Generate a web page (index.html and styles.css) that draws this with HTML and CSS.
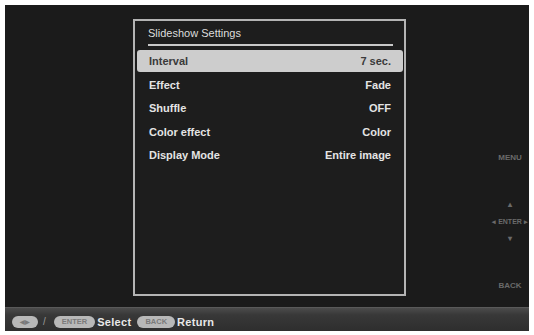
FILE: index.html
```html
<!DOCTYPE html>
<html lang="en">

<head>
    <meta charset="UTF-8">
    <meta name="viewport" content="width=device-width, initial-scale=1.0">
    <title>Slideshow Settings</title>
    <link rel="stylesheet" href="styles.css">
</head>

<body>

    <div class="screen">
        <div class="main">
            <div class="panel">
                <div class="panel-title">Slideshow Settings</div>
                <div class="settings">
                    <div class="row selected"><span>Interval</span><span>7 sec.</span></div>
                    <div class="row"><span>Effect</span><span>Fade</span></div>
                    <div class="row"><span>Shuffle</span><span>OFF</span></div>
                    <div class="row"><span>Color effect</span><span>Color</span></div>
                    <div class="row"><span>Display Mode</span><span>Entire image</span></div>
                </div>
            </div>

            <!-- hardware key hints -->
            <div class="side-keys">
                <div class="key-label menu-key">MENU</div>
                <div class="dpad">
                    <div class="dot">&#9652;</div>
                    <div class="enter-row">&#9666; ENTER &#9656;</div>
                    <div class="dot">&#9662;</div>
                </div>
                <div class="key-label back-key">BACK</div>
            </div>
        </div>

        <div class="guide-bar">
            <span class="pill pill-arrows">&#9664;&#9654;</span>
            <span class="slash">/</span>
            <span class="pill">ENTER</span>
            <span class="guide-text">Select</span>
            <span class="pill">BACK</span>
            <span class="guide-text">Return</span>
        </div>
    </div>

</body>

</html>
```

FILE: styles.css
```css
/* Photo frame OSD - slideshow settings */
body {
    margin: 0;
    padding: 5px 5px 0 5px;
    background-color: #ffffff;
    font-family: "Liberation Sans", Arial, sans-serif;
}

.screen {
    width: 524px;
    height: 326px;
    background-color: #1b1b1b;
    display: flex;
    flex-direction: column;
}

.main {
    flex: 1;
    display: flex;
    padding: 14px 0 0 128px;
}

.panel {
    width: 269px;
    height: 273px;
    border: 2px solid #b4b4b4;
    background-color: #1d1d1d;
}

.panel-title {
    margin: 0 11px 0 13px;
    padding-top: 5px;
    padding-bottom: 4px;
    font-size: 11px;
    line-height: 14px;
    color: #dcdcdc;
    border-bottom: 2px solid #c8c8c8;
}

.settings {
    margin-top: 4px;
    display: flex;
    flex-direction: column;
    gap: 1.5px;
}

.row {
    display: flex;
    justify-content: space-between;
    margin: 0 1px 0 2px;
    padding: 0 12px;
    height: 22px;
    line-height: 22px;
    font-size: 11px;
    font-weight: bold;
    color: #e4e4e4;
}

.row.selected {
    background-color: #cdcdcd;
    color: #3a3a3a;
    border-radius: 3px;
}

.side-keys {
    margin-left: auto;
    width: 38px;
    display: flex;
    flex-direction: column;
    align-items: center;
    color: #6a6a6a;
    font-size: 8px;
    font-weight: bold;
}

.menu-key {
    margin-top: 134px;
    line-height: 10px;
}

.dpad {
    margin-top: 37px;
    display: flex;
    flex-direction: column;
    align-items: center;
    gap: 8px;
}

.dot {
    font-size: 8px;
    line-height: 9px;
}

.enter-row {
    font-size: 7px;
    line-height: 9px;
    white-space: nowrap;
}

.back-key {
    margin-top: 38px;
    line-height: 10px;
}

.guide-bar {
    height: 24px;
    display: flex;
    align-items: center;
    padding: 4px 0 0 7px;
    box-sizing: border-box;
    background: linear-gradient(#4c4c4c, #383838 30%, #2e2e2e);
    border-top: 1px solid #5a5a5a;
}

.pill {
    display: inline-block;
    height: 12px;
    line-height: 12px;
    padding: 0 8px;
    border-radius: 6px;
    background-color: #b8b8b8;
    color: #7a7a7a;
    font-size: 7.5px;
    font-weight: bold;
}

.pill-arrows {
    width: 12px;
    padding: 0 7px;
    font-size: 6px;
    text-align: center;
}

.slash {
    margin: 0 8px 0 5px;
    color: #9a9a9a;
    font-size: 10px;
}

.guide-text {
    margin: 0 6px 0 2px;
    color: #e8e8e8;
    font-size: 11px;
    font-weight: bold;
    letter-spacing: 0.3px;
}
```
